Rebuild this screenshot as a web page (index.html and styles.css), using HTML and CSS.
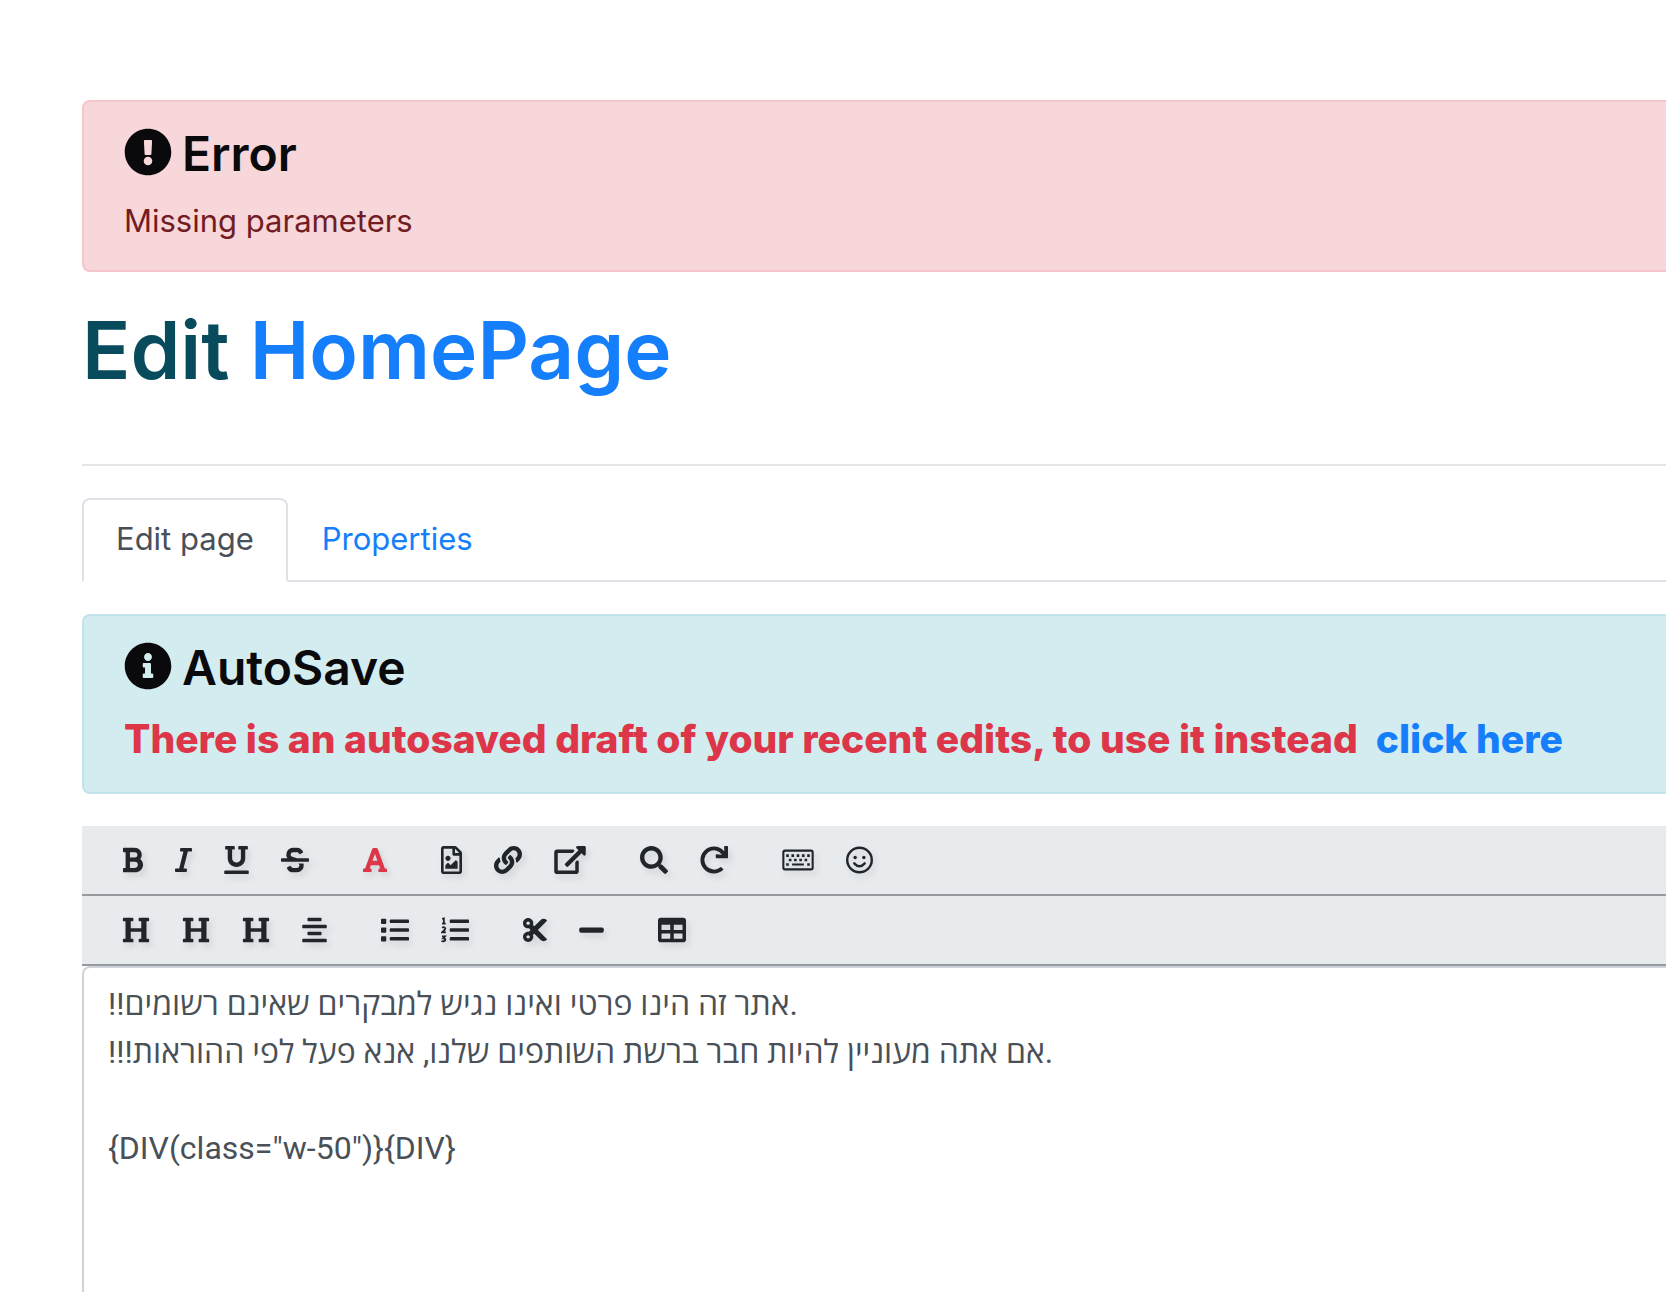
FILE: index.html
```html
<!DOCTYPE html>
<html lang="en">
<head>
<meta charset="utf-8">
<meta name="viewport" content="width=device-width, initial-scale=1">
<title>Edit HomePage</title>
<link rel="stylesheet" href="styles.css">
</head>
<body>
<main class="page">
  <section class="alert alert-danger" role="alert">
    <h2 class="alert-title">
      <svg class="alert-icon" viewBox="0 0 512 512" aria-hidden="true"><path d="M504 256c0 136.997-111.043 248-248 248S8 392.997 8 256C8 119.083 119.043 8 256 8s248 111.083 248 248zm-248 50c-25.405 0-46 20.595-46 46s20.595 46 46 46 46-20.595 46-46-20.595-46-46-46zm-43.673-165.346l7.418 136c.347 6.364 5.609 11.346 11.982 11.346h48.546c6.373 0 11.635-4.982 11.982-11.346l7.418-136c.375-6.874-5.098-12.654-11.982-12.654h-63.383c-6.884 0-12.356 5.78-11.981 12.654z"/></svg>
      <span>Error</span>
    </h2>
    <p class="alert-text">Missing parameters</p>
  </section>

  <h1 class="page-title">Edit <a href="#homepage">HomePage</a></h1>
  <hr class="divider">

  <nav class="tabs">
    <a class="tab tab-active" href="#edit">Edit page</a>
    <a class="tab" href="#properties">Properties</a>
  </nav>

  <section class="alert alert-info">
    <h2 class="alert-title">
      <svg class="alert-icon" viewBox="0 0 512 512" aria-hidden="true"><path d="M256 8C119.043 8 8 119.083 8 256c0 136.997 111.043 248 248 248s248-111.003 248-248C504 119.083 392.957 8 256 8zm0 110c23.196 0 42 18.804 42 42s-18.804 42-42 42-42-18.804-42-42 18.804-42 42-42zm56 254c0 6.627-5.373 12-12 12h-88c-6.627 0-12-5.373-12-12v-24c0-6.627 5.373-12 12-12h12v-64h-12c-6.627 0-12-5.373-12-12v-24c0-6.627 5.373-12 12-12h64c6.627 0 12 5.373 12 12v100h12c6.627 0 12 5.373 12 12v24z"/></svg>
      <span>AutoSave</span>
    </h2>
    <p class="alert-text draft-notice"><span>There is an autosaved draft of your recent edits, to use it instead</span><a href="#draft">click here</a></p>
  </section>

  <div class="editor">
    <div class="toolbar" role="toolbar" aria-label="Text tools">
      <div class="tool-group">
        <button class="tool w-21" type="button" aria-label="Bold"><svg viewBox="0 0 384 512"><path d="M333.49 238a122 122 0 0 0 27-65.21C367.87 96.49 308 32 233.42 32H34a16 16 0 0 0-16 16v48a16 16 0 0 0 16 16h31.87v288H34a16 16 0 0 0-16 16v48a16 16 0 0 0 16 16h209.32c70.8 0 134.14-51.75 141-122.4 4.74-48.45-16.39-92.06-50.83-119.6zM145.66 112h87.76a48 48 0 0 1 0 96h-87.76zm87.76 288h-87.76V288h87.76a56 56 0 0 1 0 112z"/></svg></button>
        <button class="tool w-17" type="button" aria-label="Italic"><svg viewBox="0 0 320 512"><path d="M320 48v32a16 16 0 0 1-16 16h-62.76l-80 320H208a16 16 0 0 1 16 16v32a16 16 0 0 1-16 16H16a16 16 0 0 1-16-16v-32a16 16 0 0 1 16-16h62.76l80-320H112a16 16 0 0 1-16-16V48a16 16 0 0 1 16-16h192a16 16 0 0 1 16 16z"/></svg></button>
        <button class="tool w-25" type="button" aria-label="Underline"><svg viewBox="0 0 448 512"><path d="M32 64h32v160c0 88.22 71.78 160 160 160s160-71.78 160-160V64h32a16 16 0 0 0 16-16V16a16 16 0 0 0-16-16H272a16 16 0 0 0-16 16v32a16 16 0 0 0 16 16h32v160a80 80 0 0 1-160 0V64h32a16 16 0 0 0 16-16V16a16 16 0 0 0-16-16H32a16 16 0 0 0-16 16v32a16 16 0 0 0 16 16zm400 384H16a16 16 0 0 0-16 16v32a16 16 0 0 0 16 16h416a16 16 0 0 0 16-16v-32a16 16 0 0 0-16-16z"/></svg></button>
        <button class="tool w-28" type="button" aria-label="Strikethrough"><svg viewBox="0 0 512 512"><path d="M496 224H293.9l-87.17-26.83A43.55 43.55 0 0 1 219.55 112h66.79A49.89 49.89 0 0 1 331 139.58a16 16 0 0 0 21.46 7.15l42.94-21.47a16 16 0 0 0 7.16-21.46l-.53-1A128 128 0 0 0 287.51 32h-68a123.68 123.68 0 0 0-123 135.64c2 20.89 10.1 39.83 21.78 56.36H16a16 16 0 0 0-16 16v32a16 16 0 0 0 16 16h480a16 16 0 0 0 16-16v-32a16 16 0 0 0-16-16zm-180.24 96A43 43 0 0 1 336 356.45 43.59 43.59 0 0 1 292.45 400h-66.79A49.89 49.89 0 0 1 181 372.42a16 16 0 0 0-21.46-7.15l-42.94 21.47a16 16 0 0 0-7.16 21.46l.53 1A128 128 0 0 0 224.49 480h68a123.68 123.68 0 0 0 123-135.64 114.25 114.25 0 0 0-5.34-24.36z"/></svg></button>
      </div>
      <div class="tool-group">
        <button class="tool tool-red w-24" type="button" aria-label="Text color"><svg viewBox="0 0 448 512"><path d="M432 416h-23.41L277.88 53.69A32 32 0 0 0 247.58 32h-47.16a32 32 0 0 0-30.3 21.69L39.41 416H16a16 16 0 0 0-16 16v32a16 16 0 0 0 16 16h128a16 16 0 0 0 16-16v-32a16 16 0 0 0-16-16h-19.58l23.3-64h152.56l23.3 64H304a16 16 0 0 0-16 16v32a16 16 0 0 0 16 16h128a16 16 0 0 0 16-16v-32a16 16 0 0 0-16-16zM176.85 272L224 142.51 271.15 272z"/></svg></button>
      </div>
      <div class="tool-group">
        <button class="tool w-21" type="button" aria-label="Image"><svg viewBox="0 0 384 512"><path d="M369.9 97.9L286 14C277 5 264.8-.1 252.1-.1H48C21.5 0 0 21.5 0 48v416c0 26.5 21.5 48 48 48h288c26.5 0 48-21.5 48-48V131.9c0-12.7-5.1-25-14.1-34zM332.1 128H256V51.9l76.1 76.1zM48 464V48h160v104c0 13.3 10.7 24 24 24h104v288H48zm32-48h224V288l-23.5-23.5c-4.7-4.7-12.3-4.7-17 0L176 352l-39.5-39.5c-4.7-4.7-12.3-4.7-17 0L80 352v64zm48-240c-26.5 0-48 21.5-48 48s21.5 48 48 48 48-21.5 48-48-21.5-48-48-48z"/></svg></button>
        <button class="tool w-28" type="button" aria-label="Wiki link"><svg viewBox="0 0 512 512"><path d="M326.612 185.391c59.747 59.809 58.927 155.698.36 214.59-.11.12-.24.25-.36.37l-67.2 67.2c-59.27 59.27-155.699 59.262-214.96 0-59.27-59.26-59.27-155.7 0-214.96l37.106-37.106c9.84-9.84 26.786-3.3 27.294 10.606.648 17.722 3.826 35.527 9.69 52.721 1.986 5.822.567 12.262-3.783 16.612l-13.087 13.087c-28.026 28.026-28.905 73.66-1.155 101.96 28.024 28.579 74.086 28.749 102.325.51l67.2-67.19c28.191-28.191 28.073-73.757 0-101.83-3.701-3.694-7.429-6.564-10.341-8.569a16.037 16.037 0 0 1-6.947-12.606c-.396-10.567 3.348-21.456 11.698-29.806l21.054-21.055c5.521-5.521 14.182-6.199 20.584-1.731a152.482 152.482 0 0 1 20.522 17.197zM467.547 44.449c-59.261-59.262-155.69-59.27-214.96 0l-67.2 67.2c-.12.12-.25.25-.36.37-58.566 58.892-59.387 154.781.36 214.59a152.454 152.454 0 0 0 20.521 17.196c6.402 4.468 15.064 3.789 20.584-1.731l21.054-21.055c8.35-8.35 12.094-19.239 11.698-29.806a16.037 16.037 0 0 0-6.947-12.606c-2.912-2.005-6.64-4.875-10.341-8.569-28.073-28.073-28.191-73.639 0-101.83l67.2-67.19c28.239-28.239 74.3-28.069 102.325.51 27.75 28.3 26.872 73.934-1.155 101.96l-13.087 13.087c-4.35 4.35-5.769 10.79-3.783 16.612 5.864 17.194 9.042 34.999 9.69 52.721.509 13.906 17.454 20.446 27.294 10.606l37.106-37.106c59.271-59.259 59.271-155.699.001-214.959z"/></svg></button>
        <button class="tool w-32" type="button" aria-label="External link"><svg viewBox="0 0 576 512"><path d="M576 24v127.984c0 21.461-25.96 31.98-40.971 16.971l-35.707-35.709-243.523 243.523c-9.373 9.373-24.568 9.373-33.941 0l-22.627-22.627c-9.373-9.373-9.373-24.569 0-33.941L442.756 76.676l-35.703-35.705C391.982 25.9 402.656 0 424.024 0H552c13.255 0 24 10.745 24 24zM407.029 270.794l-16 16A23.999 23.999 0 0 0 384 303.765V448H64V128h264a24.003 24.003 0 0 0 16.97-7.029l16-16C376.089 89.851 365.381 64 344 64H48C21.49 64 0 85.49 0 112v352c0 26.51 21.49 48 48 48h352c26.51 0 48-21.49 48-48V287.764c0-21.382-25.852-32.09-40.971-16.97z"/></svg></button>
      </div>
      <div class="tool-group">
        <button class="tool w-28" type="button" aria-label="Find"><svg viewBox="0 0 512 512"><path d="M505 442.7L405.3 343c-4.5-4.5-10.6-7-17-7H372c27.6-35.3 44-79.7 44-128C416 93.1 322.9 0 208 0S0 93.1 0 208s93.1 208 208 208c48.3 0 92.7-16.4 128-44v16.3c0 6.4 2.5 12.5 7 17l99.7 99.7c9.4 9.4 24.6 9.4 33.9 0l28.3-28.3c9.4-9.4 9.4-24.6.1-34zM208 336c-70.7 0-128-57.2-128-128 0-70.7 57.2-128 128-128 70.7 0 128 57.2 128 128 0 70.7-57.2 128-128 128z"/></svg></button>
        <button class="tool w-28" type="button" aria-label="Replace"><svg viewBox="0 0 512 512"><path d="M500.33 0h-47.41a12 12 0 0 0-12 12.57l4 82.76A247.42 247.42 0 0 0 256 8C119.34 8 7.9 119.53 8 256.19 8.1 393.07 119.1 504 256 504a247.1 247.1 0 0 0 166.18-63.91 12 12 0 0 0 .48-17.43l-34-34a12 12 0 0 0-16.38-.55A176 176 0 1 1 402.1 157.8l-101.53-4.87a12 12 0 0 0-12.57 12v47.41a12 12 0 0 0 12 12h200.33a12 12 0 0 0 12-12V12a12 12 0 0 0-12-12z"/></svg></button>
      </div>
      <div class="tool-group">
        <button class="tool w-32" type="button" aria-label="Special characters"><svg viewBox="0 0 576 512"><rect x="20" y="84" width="536" height="344" rx="30" fill="none" stroke="currentColor" stroke-width="38"/><path d="M72 152h48v48H72zM168 152h48v48h-48zM264 152h48v48h-48zM360 152h48v48h-48zM456 152h48v48h-48zM120 232h48v48h-48zM216 232h48v48h-48zM312 232h48v48h-48zM408 232h48v48h-48zM72 314h48v48H72zM456 314h48v48h-48zM180 322h216v34H180z"/></svg></button>
        <button class="tool w-27" type="button" aria-label="Smileys"><svg viewBox="0 0 496 512"><circle cx="248" cy="256" r="226" fill="none" stroke="currentColor" stroke-width="44"/><circle cx="168" cy="208" r="32"/><circle cx="328" cy="208" r="32"/><path d="M152 318q96 108 192 0" fill="none" stroke="currentColor" stroke-width="44" stroke-linecap="round"/></svg></button>
      </div>
    </div>

    <div class="toolbar" role="toolbar" aria-label="Block tools">
      <div class="tool-group">
        <button class="tool w-28" type="button" aria-label="Heading 1"><svg viewBox="0 0 512 512"><path id="heading" d="M448 96v320h32a16 16 0 0 1 16 16v32a16 16 0 0 1-16 16H320a16 16 0 0 1-16-16v-32a16 16 0 0 1 16-16h32V288H160v128h32a16 16 0 0 1 16 16v32a16 16 0 0 1-16 16H32a16 16 0 0 1-16-16v-32a16 16 0 0 1 16-16h32V96H32a16 16 0 0 1-16-16V48a16 16 0 0 1 16-16h160a16 16 0 0 1 16 16v32a16 16 0 0 1-16 16h-32v128h192V96h-32a16 16 0 0 1-16-16V48a16 16 0 0 1 16-16h160a16 16 0 0 1 16 16v32a16 16 0 0 1-16 16z"/></svg></button>
        <button class="tool w-28" type="button" aria-label="Heading 2"><svg viewBox="0 0 512 512"><use href="#heading"/></svg></button>
        <button class="tool w-28" type="button" aria-label="Heading 3"><svg viewBox="0 0 512 512"><use href="#heading"/></svg></button>
        <button class="tool w-25" type="button" aria-label="Center"><svg viewBox="0 0 448 512"><rect x="96" y="32" width="256" height="64" rx="14"/><rect y="160" width="448" height="64" rx="16"/><rect x="96" y="288" width="256" height="64" rx="14"/><rect y="416" width="448" height="64" rx="16"/></svg></button>
      </div>
      <div class="tool-group">
        <button class="tool w-28" type="button" aria-label="Bullet list"><svg viewBox="0 0 512 512"><rect y="48" width="96" height="96" rx="16"/><rect y="208" width="96" height="96" rx="16"/><rect y="368" width="96" height="96" rx="16"/><rect x="160" y="64" width="352" height="64" rx="16"/><rect x="160" y="224" width="352" height="64" rx="16"/><rect x="160" y="384" width="352" height="64" rx="16"/></svg></button>
        <button class="tool w-28" type="button" aria-label="Numbered list"><svg viewBox="0 0 512 512"><path d="M22 52l30-8v92M18 140h68M20 216q28-22 48-4t0 38l-44 48h64M18 372h54l-30 36q38 0 38 26t-32 28-34-10" fill="none" stroke="currentColor" stroke-width="34"/><rect x="160" y="64" width="352" height="64" rx="16"/><rect x="160" y="224" width="352" height="64" rx="16"/><rect x="160" y="384" width="352" height="64" rx="16"/></svg></button>
      </div>
      <div class="tool-group">
        <button class="tool w-24" type="button" aria-label="Page break"><svg viewBox="0 0 448 512"><path d="M278.06 256L444.48 89.57c4.69-4.69 4.69-12.29 0-16.97-32.8-32.8-85.99-32.8-118.79 0L210.18 188.12l-24.86-24.86c4.31-10.92 6.68-22.81 6.68-35.26 0-53.02-42.98-96-96-96S0 74.98 0 128s42.98 96 96 96c4.54 0 8.99-.32 13.36-.93L142.29 256l-32.93 32.93c-4.37-.61-8.83-.93-13.36-.93-53.02 0-96 42.98-96 96s42.98 96 96 96 96-42.98 96-96c0-12.45-2.37-24.34-6.68-35.26l24.86-24.86L325.69 439.4c32.8 32.8 85.99 32.8 118.79 0 4.69-4.68 4.69-12.28 0-16.97L278.06 256zM96 160c-17.64 0-32-14.36-32-32s14.36-32 32-32 32 14.36 32 32-14.36 32-32 32zm0 256c-17.64 0-32-14.36-32-32s14.36-32 32-32 32 14.36 32 32-14.36 32-32 32z"/></svg></button>
        <button class="tool w-25" type="button" aria-label="Horizontal rule"><svg viewBox="0 0 448 512"><rect y="208" width="448" height="96" rx="32"/></svg></button>
      </div>
      <div class="tool-group">
        <button class="tool w-28" type="button" aria-label="Table"><svg viewBox="0 0 512 512"><path d="M464 32H48C21.49 32 0 53.49 0 80v352c0 26.51 21.49 48 48 48h416c26.51 0 48-21.49 48-48V80c0-26.51-21.49-48-48-48zM224 416H64v-96h160v96zm0-160H64v-96h160v96zm224 160H288v-96h160v96zm0-160H288v-96h160v96z"/></svg></button>
      </div>
    </div>

    <textarea class="source" dir="ltr" aria-label="Page source" spellcheck="false">!!אתר זה הינו פרטי ואינו נגיש למבקרים שאינם רשומים.
!!!אם אתה מעוניין להיות חבר ברשת השותפים שלנו, אנא פעל לפי ההוראות.

{DIV(class="w-50")}{DIV}</textarea>
  </div>
</main>
</body>
</html>
```
FILE: styles.css
```css
* {
  box-sizing: border-box;
}

body {
  margin: 0;
  background: #fff;
  color: #212529;
  font-family: Inter, "Open Sans", "Liberation Sans", sans-serif;
  font-size: 31px;
  line-height: 48px;
}

a {
  color: #157efb;
  text-decoration: none;
}

.page {
  display: flex;
  flex-direction: column;
  min-height: 100vh;
  padding: 100px 0 0 82px;
}

.alert {
  padding: 23px 40px 25px;
  border: 2px solid;
  border-right: 0;
  border-radius: 8px 0 0 8px;
}

.alert-danger {
  background: #f7d7da;
  border-color: #f4c6cb;
  color: #721c24;
}

.alert-info {
  margin: 32px 0;
  background: #d3ecef;
  border-color: #bfe5eb;
}

.alert-title {
  display: flex;
  align-items: center;
  gap: 10px;
  margin: 0 0 14px;
  color: #0a0a0c;
  font-size: 48px;
  font-weight: 600;
  line-height: 58px;
}

.alert-icon {
  width: 48px;
  height: 48px;
  margin-bottom: 4px;
  fill: currentColor;
}

.alert-text {
  margin: 0;
}

.draft-notice {
  display: flex;
  gap: 18px;
  color: #dc3648;
  font-size: 39px;
  font-weight: 800;
  line-height: 56px;
  white-space: nowrap;
}

.page-title {
  margin: 30px 0 66px;
  color: #074b5c;
  font-size: 80px;
  font-weight: 600;
  line-height: 96px;
}

.divider {
  width: 100%;
  margin: 0 0 32px;
  border: 0;
  border-top: 2px solid #e4e5e6;
}

.tabs {
  display: flex;
  border-bottom: 2px solid #dee2e6;
}

.tab {
  margin-bottom: -2px;
  padding: 15px 32px 17px;
  border: 2px solid transparent;
  border-radius: 8px 8px 0 0;
}

.tab-active {
  background: #fff;
  border-color: #dee2e6 #dee2e6 #fff;
  color: #495057;
}

.editor {
  display: flex;
  flex: 1;
  flex-direction: column;
}

.toolbar {
  display: flex;
  align-items: center;
  gap: 54px;
  height: 70px;
  padding: 0 40px;
  background: #e7ebee;
  border-bottom: 2px solid #96999d;
}

.tool-group {
  display: flex;
  gap: 32px;
}

.tool {
  display: flex;
  padding: 0;
  border: 0;
  background: none;
  color: #212529;
  filter: drop-shadow(3px 4px 3px rgba(0, 0, 0, 0.1));
}

.tool svg {
  width: 100%;
  height: 28px;
  fill: currentColor;
}

.tool-red {
  color: #dc3648;
}

.w-17 { width: 17px; }
.w-21 { width: 21px; }
.w-24 { width: 24px; }
.w-25 { width: 25px; }
.w-27 { width: 27px; }
.w-28 { width: 28px; }
.w-32 { width: 32px; }

.source {
  flex: 1;
  width: 100%;
  min-height: 320px;
  padding: 12px 24px;
  border: 2px solid #ced4da;
  border-width: 2px 0 0 2px;
  border-radius: 8px 0 0 0;
  outline: 0;
  background: #fff;
  color: #495057;
  font-family: Roboto, "Open Sans", "Liberation Sans", sans-serif;
  font-size: 32px;
  line-height: 48px;
  overflow: hidden;
  resize: none;
}
```
